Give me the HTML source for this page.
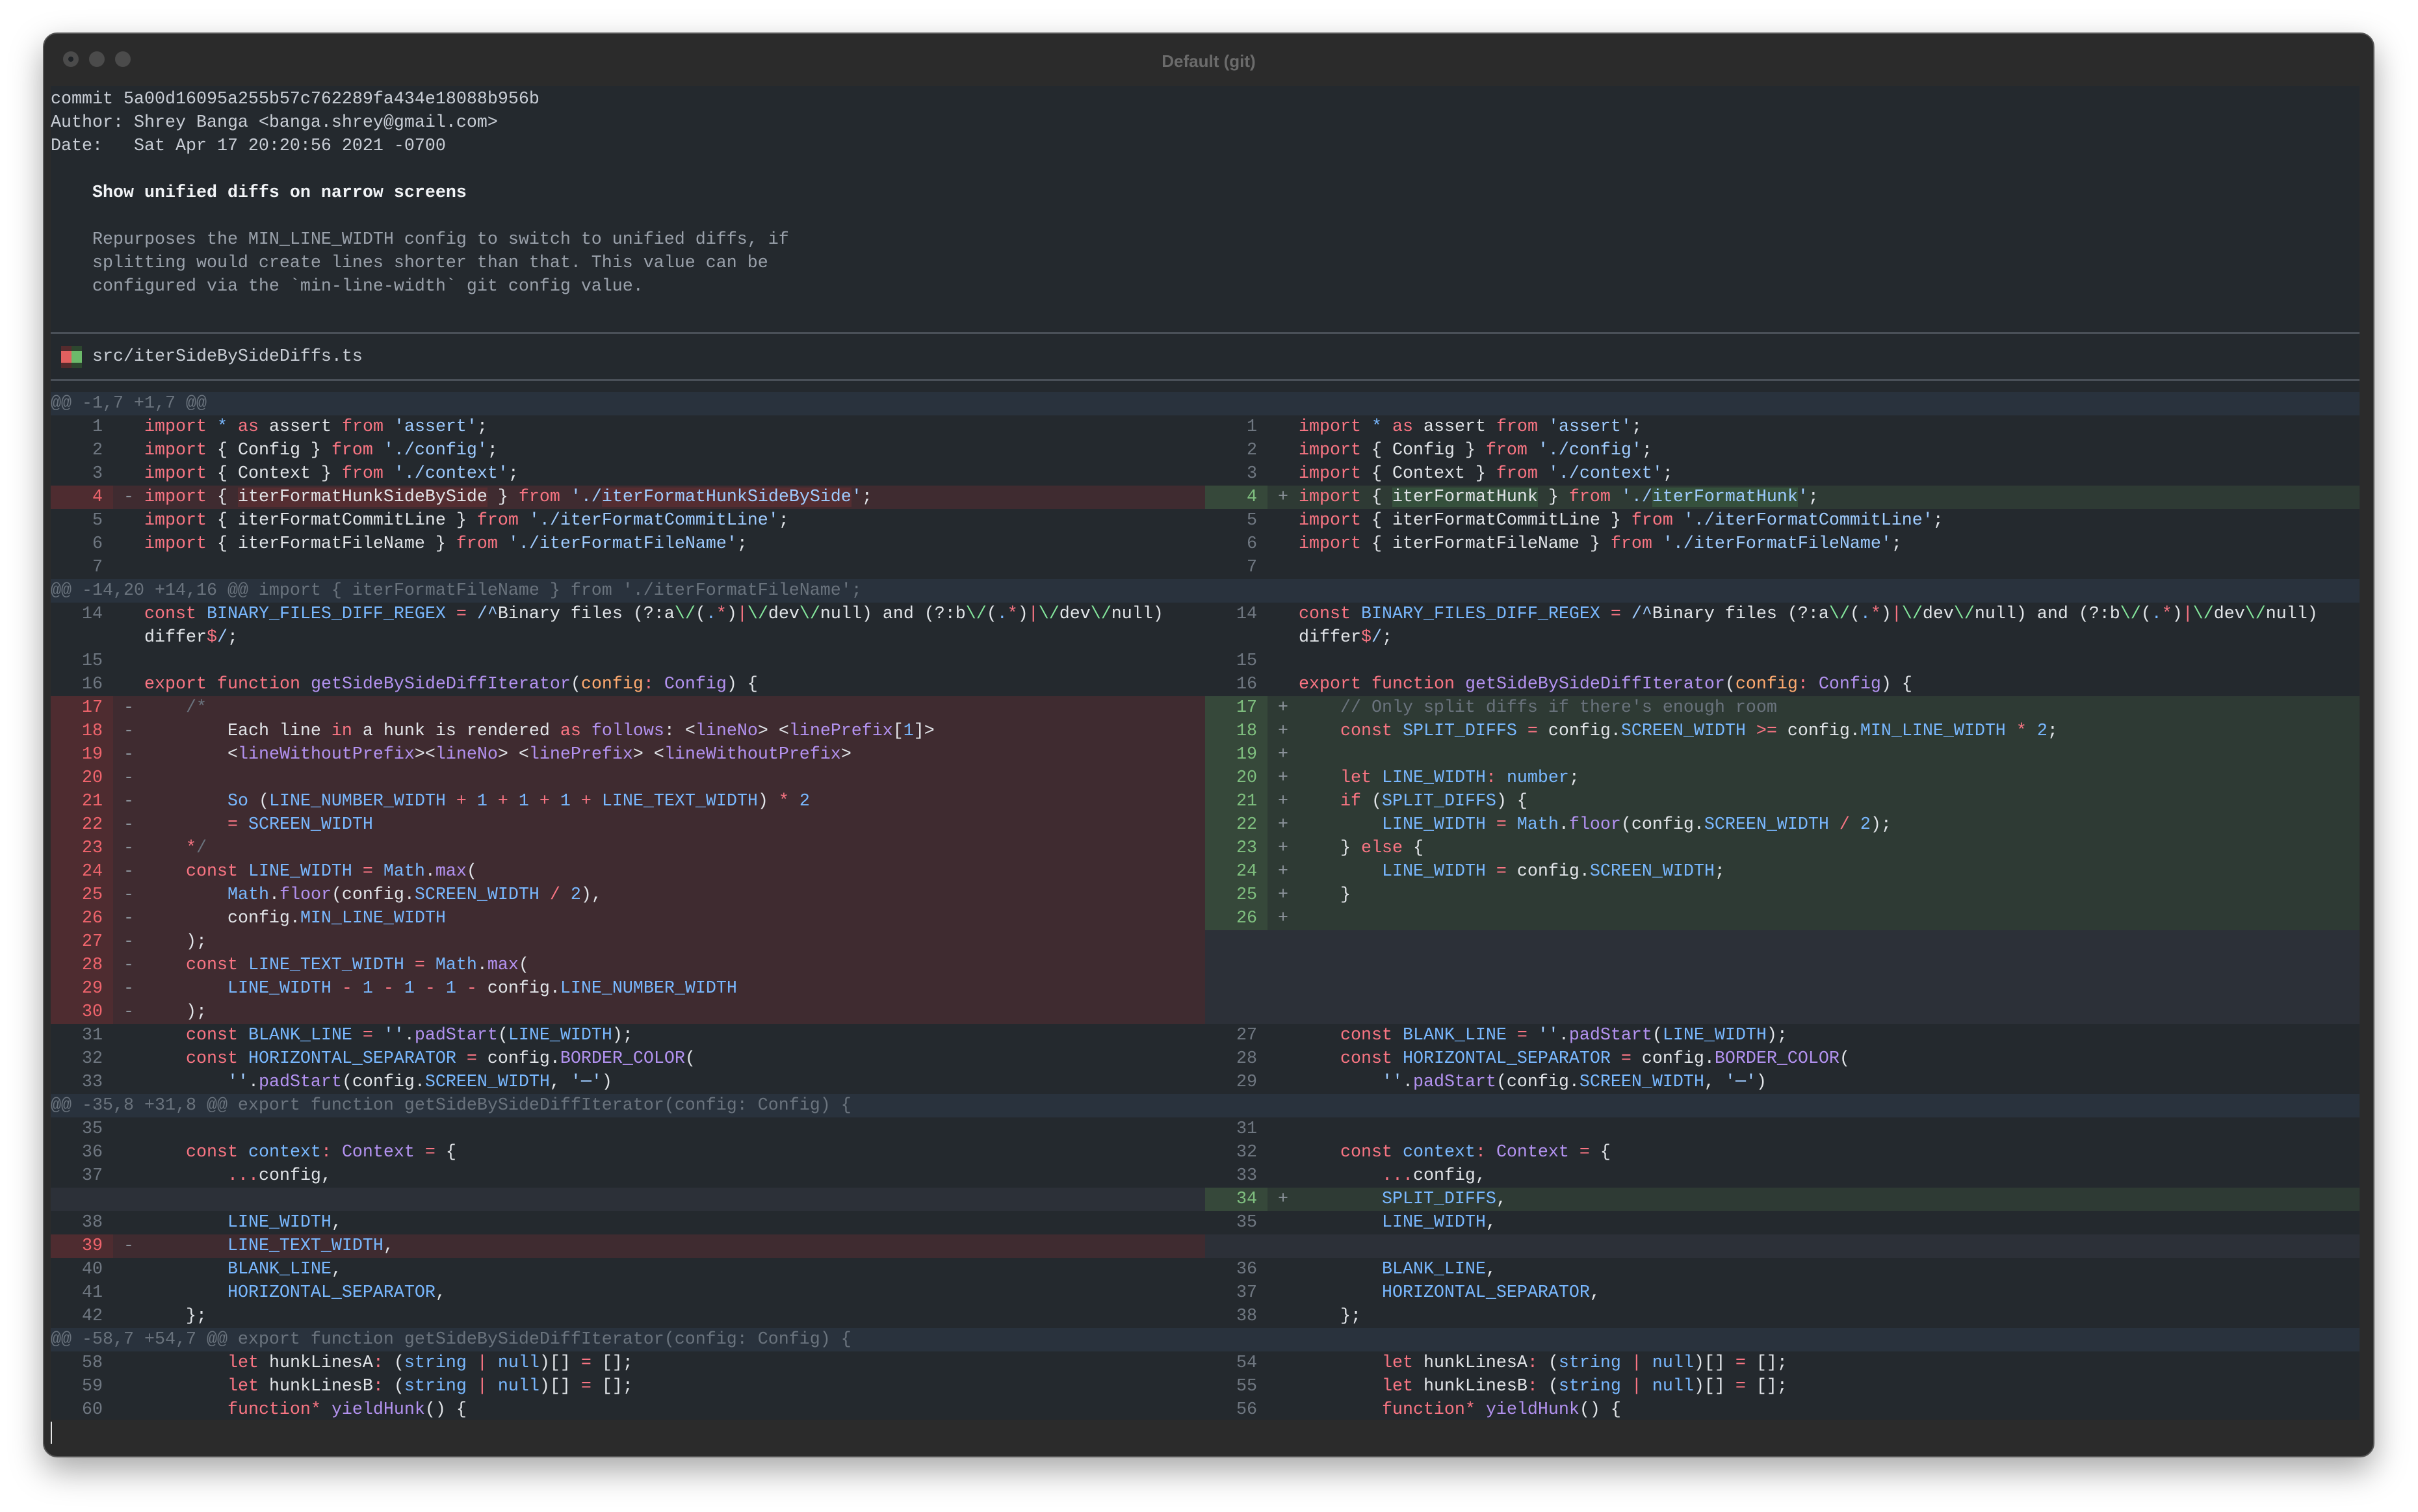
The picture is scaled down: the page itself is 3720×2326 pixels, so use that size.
<!DOCTYPE html>
<html><head><meta charset="utf-8"><style>
*{margin:0;padding:0;box-sizing:border-box}
html,body{width:3720px;height:2326px;background:#fff;overflow:hidden}
#win{position:absolute;left:66px;top:50px;width:3587px;height:2192px;background:#2b2b2b;border:2px solid #555;border-radius:22px;box-shadow:0 20px 50px rgba(0,0,0,.35)}
.tl{position:absolute;top:27px;width:24px;height:24px;border-radius:50%;background:#4b4b4b}
#title{position:absolute;left:0;right:0;top:27px;text-align:center;font:bold 26px "Liberation Sans",sans-serif;color:#6b6b6b}
#content{position:absolute;left:78px;top:132px;width:3552px;height:2052px;background:#24292e}
#w{position:absolute;left:0;top:3px;width:3720px;height:2300px}
.r{position:absolute;height:36px;line-height:36px;white-space:pre;font-family:"Liberation Mono",monospace;font-size:26.67px;color:#e1e4e8}
.full{left:78px;width:3552px}
.L{left:78px;width:1776px}
.R{left:1854px;width:1776px}
.h{background:#29323d;color:#6a737d}
.d{background:linear-gradient(to right,#4e2c30 96px,#3f2b30 96px)}
.a{background:linear-gradient(to right,#36483a 96px,#2e3a34 96px)}
.e{background:#2c3038}
.n{color:#6f7781}
.d .n{color:#f0646c}
.a .n{color:#7fbf7f}
.m{color:#8b929a}
.k{color:#f97583}.f{color:#b392f0}.c{color:#79b8ff}.s{color:#9ecbff}.p{color:#ffab70}.t{color:#b392f0}.o{color:#6a737d}.g{color:#85e89d}
.hd{background:#552d31}.ha{background:#35503c}
.gr{color:#c9ced6}.dim{color:#9aa1ab}
.sep{position:absolute;left:78px;width:3552px;height:3px;background:#4a5058}
</style></head><body>
<div id="win">
<div class="tl" style="left:29px"><div style="position:absolute;left:8px;top:8px;width:8px;height:8px;border-radius:50%;background:#1f2327"></div></div>
<div class="tl" style="left:69px"></div>
<div class="tl" style="left:109px"></div>
<div id="title">Default (git)</div>
</div>
<div id="content"></div>
<div id="w">
<div class="r full gr" style="top:132px">commit 5a00d16095a255b57c762289fa434e18088b956b</div>
<div class="r full gr" style="top:168px">Author: Shrey Banga &lt;banga.shrey@gmail.com&gt;</div>
<div class="r full gr" style="top:204px">Date:   Sat Apr 17 20:20:56 2021 -0700</div>
<div class="r full" style="top:276px;font-weight:bold;color:#f2f4f7">    Show unified diffs on narrow screens</div>
<div class="r full dim" style="top:348px">    Repurposes the MIN_LINE_WIDTH config to switch to unified diffs, if</div>
<div class="r full dim" style="top:384px">    splitting would create lines shorter than that. This value can be</div>
<div class="r full dim" style="top:420px">    configured via the `min-line-width` git config value.</div>
<div class="sep" style="top:508px"></div>
<div style="position:absolute;left:94px;top:529px;width:16px;height:34px;background:#552b2d"></div>
<div style="position:absolute;left:110px;top:529px;width:16px;height:34px;background:#2d472f"></div>
<div style="position:absolute;left:94px;top:537px;width:16px;height:18px;background:#e2605f"></div>
<div style="position:absolute;left:110px;top:537px;width:16px;height:18px;background:#6cba6a"></div>
<div class="r full gr" style="top:528px">    src/iterSideBySideDiffs.ts</div>
<div class="sep" style="top:580px"></div>

<div class="r full h" style="top:600px">@@ -1,7 +1,7 @@</div>
<div class="r L" style="top:636px"><span class="n">    1</span>    <span class="k">import</span> <span class="c">*</span> <span class="k">as</span> assert <span class="k">from</span> <span class="s">'assert'</span>;</div>
<div class="r R" style="top:636px"><span class="n">    1</span>    <span class="k">import</span> <span class="c">*</span> <span class="k">as</span> assert <span class="k">from</span> <span class="s">'assert'</span>;</div>
<div class="r L" style="top:672px"><span class="n">    2</span>    <span class="k">import</span> { Config } <span class="k">from</span> <span class="s">'./config'</span>;</div>
<div class="r R" style="top:672px"><span class="n">    2</span>    <span class="k">import</span> { Config } <span class="k">from</span> <span class="s">'./config'</span>;</div>
<div class="r L" style="top:708px"><span class="n">    3</span>    <span class="k">import</span> { Context } <span class="k">from</span> <span class="s">'./context'</span>;</div>
<div class="r R" style="top:708px"><span class="n">    3</span>    <span class="k">import</span> { Context } <span class="k">from</span> <span class="s">'./context'</span>;</div>
<div class="r L d" style="top:744px"><span class="n">    4</span>  <span class="m">-</span> <span class="k">import</span> { <span class="hd">iterFormatHunkSideBySide</span> } <span class="k">from</span> <span class="s">'./<span class="hd">iterFormatHunkSideBySide</span>'</span>;</div>
<div class="r R a" style="top:744px"><span class="n">    4</span>  <span class="m">+</span> <span class="k">import</span> { <span class="ha">iterFormatHunk</span> } <span class="k">from</span> <span class="s">'./<span class="ha">iterFormatHunk</span>'</span>;</div>
<div class="r L" style="top:780px"><span class="n">    5</span>    <span class="k">import</span> { iterFormatCommitLine } <span class="k">from</span> <span class="s">'./iterFormatCommitLine'</span>;</div>
<div class="r R" style="top:780px"><span class="n">    5</span>    <span class="k">import</span> { iterFormatCommitLine } <span class="k">from</span> <span class="s">'./iterFormatCommitLine'</span>;</div>
<div class="r L" style="top:816px"><span class="n">    6</span>    <span class="k">import</span> { iterFormatFileName } <span class="k">from</span> <span class="s">'./iterFormatFileName'</span>;</div>
<div class="r R" style="top:816px"><span class="n">    6</span>    <span class="k">import</span> { iterFormatFileName } <span class="k">from</span> <span class="s">'./iterFormatFileName'</span>;</div>
<div class="r L" style="top:852px"><span class="n">    7</span></div>
<div class="r R" style="top:852px"><span class="n">    7</span></div>

<div class="r full h" style="top:888px">@@ -14,20 +14,16 @@ import { iterFormatFileName } from './iterFormatFileName';</div>
<div class="r L" style="top:924px"><span class="n">   14</span>    <span class="k">const</span> <span class="c">BINARY_FILES_DIFF_REGEX</span> <span class="k">=</span> <span class="s">/^</span>Binary files (?:a<span class="g">\/</span>(<span class="c">.</span><span class="k">*</span>)<span class="k">|</span><span class="g">\/</span>dev<span class="g">\/</span>null) and (?:b<span class="g">\/</span>(<span class="c">.</span><span class="k">*</span>)<span class="k">|</span><span class="g">\/</span>dev<span class="g">\/</span>null)</div>
<div class="r R" style="top:924px"><span class="n">   14</span>    <span class="k">const</span> <span class="c">BINARY_FILES_DIFF_REGEX</span> <span class="k">=</span> <span class="s">/^</span>Binary files (?:a<span class="g">\/</span>(<span class="c">.</span><span class="k">*</span>)<span class="k">|</span><span class="g">\/</span>dev<span class="g">\/</span>null) and (?:b<span class="g">\/</span>(<span class="c">.</span><span class="k">*</span>)<span class="k">|</span><span class="g">\/</span>dev<span class="g">\/</span>null)</div>
<div class="r L" style="top:960px">         differ<span class="k">$</span><span class="s">/</span>;</div>
<div class="r R" style="top:960px">         differ<span class="k">$</span><span class="s">/</span>;</div>
<div class="r L" style="top:996px"><span class="n">   15</span></div>
<div class="r R" style="top:996px"><span class="n">   15</span></div>
<div class="r L" style="top:1032px"><span class="n">   16</span>    <span class="k">export</span> <span class="k">function</span> <span class="f">getSideBySideDiffIterator</span>(<span class="p">config</span><span class="k">:</span> <span class="t">Config</span>) {</div>
<div class="r R" style="top:1032px"><span class="n">   16</span>    <span class="k">export</span> <span class="k">function</span> <span class="f">getSideBySideDiffIterator</span>(<span class="p">config</span><span class="k">:</span> <span class="t">Config</span>) {</div>

<div class="r L d" style="top:1068px"><span class="n">   17</span>  <span class="m">-</span>     <span class="o">/*</span></div>
<div class="r L d" style="top:1104px"><span class="n">   18</span>  <span class="m">-</span>         Each line <span class="k">in</span> a hunk is rendered <span class="k">as</span> <span class="t">follows</span>: &lt;<span class="t">lineNo</span>&gt; &lt;<span class="t">linePrefix</span>[<span class="c">1</span>]&gt;</div>
<div class="r L d" style="top:1140px"><span class="n">   19</span>  <span class="m">-</span>         &lt;<span class="t">lineWithoutPrefix</span>&gt;&lt;<span class="t">lineNo</span>&gt; &lt;<span class="t">linePrefix</span>&gt; &lt;<span class="t">lineWithoutPrefix</span>&gt;</div>
<div class="r L d" style="top:1176px"><span class="n">   20</span>  <span class="m">-</span></div>
<div class="r L d" style="top:1212px"><span class="n">   21</span>  <span class="m">-</span>         <span class="c">So</span> (<span class="c">LINE_NUMBER_WIDTH</span> <span class="k">+</span> <span class="c">1</span> <span class="k">+</span> <span class="c">1</span> <span class="k">+</span> <span class="c">1</span> <span class="k">+</span> <span class="c">LINE_TEXT_WIDTH</span>) <span class="k">*</span> <span class="c">2</span></div>
<div class="r L d" style="top:1248px"><span class="n">   22</span>  <span class="m">-</span>         <span class="k">=</span> <span class="c">SCREEN_WIDTH</span></div>
<div class="r L d" style="top:1284px"><span class="n">   23</span>  <span class="m">-</span>     <span class="k">*</span><span class="o">/</span></div>
<div class="r L d" style="top:1320px"><span class="n">   24</span>  <span class="m">-</span>     <span class="k">const</span> <span class="c">LINE_WIDTH</span> <span class="k">=</span> <span class="c">Math</span>.<span class="f">max</span>(</div>
<div class="r L d" style="top:1356px"><span class="n">   25</span>  <span class="m">-</span>         <span class="c">Math</span>.<span class="f">floor</span>(config.<span class="c">SCREEN_WIDTH</span> <span class="k">/</span> <span class="c">2</span>),</div>
<div class="r L d" style="top:1392px"><span class="n">   26</span>  <span class="m">-</span>         config.<span class="c">MIN_LINE_WIDTH</span></div>
<div class="r L d" style="top:1428px"><span class="n">   27</span>  <span class="m">-</span>     );</div>
<div class="r L d" style="top:1464px"><span class="n">   28</span>  <span class="m">-</span>     <span class="k">const</span> <span class="c">LINE_TEXT_WIDTH</span> <span class="k">=</span> <span class="c">Math</span>.<span class="f">max</span>(</div>
<div class="r L d" style="top:1500px"><span class="n">   29</span>  <span class="m">-</span>         <span class="c">LINE_WIDTH</span> <span class="k">-</span> <span class="c">1</span> <span class="k">-</span> <span class="c">1</span> <span class="k">-</span> <span class="c">1</span> <span class="k">-</span> config.<span class="c">LINE_NUMBER_WIDTH</span></div>
<div class="r L d" style="top:1536px"><span class="n">   30</span>  <span class="m">-</span>     );</div>

<div class="r R a" style="top:1068px"><span class="n">   17</span>  <span class="m">+</span>     <span class="o">// Only split diffs if there's enough room</span></div>
<div class="r R a" style="top:1104px"><span class="n">   18</span>  <span class="m">+</span>     <span class="k">const</span> <span class="c">SPLIT_DIFFS</span> <span class="k">=</span> config.<span class="c">SCREEN_WIDTH</span> <span class="k">&gt;=</span> config.<span class="c">MIN_LINE_WIDTH</span> <span class="k">*</span> <span class="c">2</span>;</div>
<div class="r R a" style="top:1140px"><span class="n">   19</span>  <span class="m">+</span></div>
<div class="r R a" style="top:1176px"><span class="n">   20</span>  <span class="m">+</span>     <span class="k">let</span> <span class="c">LINE_WIDTH</span><span class="k">:</span> <span class="c">number</span>;</div>
<div class="r R a" style="top:1212px"><span class="n">   21</span>  <span class="m">+</span>     <span class="k">if</span> (<span class="c">SPLIT_DIFFS</span>) {</div>
<div class="r R a" style="top:1248px"><span class="n">   22</span>  <span class="m">+</span>         <span class="c">LINE_WIDTH</span> <span class="k">=</span> <span class="c">Math</span>.<span class="f">floor</span>(config.<span class="c">SCREEN_WIDTH</span> <span class="k">/</span> <span class="c">2</span>);</div>
<div class="r R a" style="top:1284px"><span class="n">   23</span>  <span class="m">+</span>     } <span class="k">else</span> {</div>
<div class="r R a" style="top:1320px"><span class="n">   24</span>  <span class="m">+</span>         <span class="c">LINE_WIDTH</span> <span class="k">=</span> config.<span class="c">SCREEN_WIDTH</span>;</div>
<div class="r R a" style="top:1356px"><span class="n">   25</span>  <span class="m">+</span>     }</div>
<div class="r R a" style="top:1392px"><span class="n">   26</span>  <span class="m">+</span></div>
<div class="r R e" style="top:1428px;height:144px"></div>

<div class="r L" style="top:1572px"><span class="n">   31</span>        <span class="k">const</span> <span class="c">BLANK_LINE</span> <span class="k">=</span> <span class="s">''</span>.<span class="f">padStart</span>(<span class="c">LINE_WIDTH</span>);</div>
<div class="r R" style="top:1572px"><span class="n">   27</span>        <span class="k">const</span> <span class="c">BLANK_LINE</span> <span class="k">=</span> <span class="s">''</span>.<span class="f">padStart</span>(<span class="c">LINE_WIDTH</span>);</div>
<div class="r L" style="top:1608px"><span class="n">   32</span>        <span class="k">const</span> <span class="c">HORIZONTAL_SEPARATOR</span> <span class="k">=</span> config.<span class="f">BORDER_COLOR</span>(</div>
<div class="r R" style="top:1608px"><span class="n">   28</span>        <span class="k">const</span> <span class="c">HORIZONTAL_SEPARATOR</span> <span class="k">=</span> config.<span class="f">BORDER_COLOR</span>(</div>
<div class="r L" style="top:1644px"><span class="n">   33</span>            <span class="s">''</span>.<span class="f">padStart</span>(config.<span class="c">SCREEN_WIDTH</span>, <span class="s">'─'</span>)</div>
<div class="r R" style="top:1644px"><span class="n">   29</span>            <span class="s">''</span>.<span class="f">padStart</span>(config.<span class="c">SCREEN_WIDTH</span>, <span class="s">'─'</span>)</div>

<div class="r full h" style="top:1680px">@@ -35,8 +31,8 @@ export function getSideBySideDiffIterator(config: Config) {</div>
<div class="r L" style="top:1716px"><span class="n">   35</span></div>
<div class="r R" style="top:1716px"><span class="n">   31</span></div>
<div class="r L" style="top:1752px"><span class="n">   36</span>        <span class="k">const</span> <span class="c">context</span><span class="k">:</span> <span class="t">Context</span> <span class="k">=</span> {</div>
<div class="r R" style="top:1752px"><span class="n">   32</span>        <span class="k">const</span> <span class="c">context</span><span class="k">:</span> <span class="t">Context</span> <span class="k">=</span> {</div>
<div class="r L" style="top:1788px"><span class="n">   37</span>            <span class="k">...</span>config,</div>
<div class="r R" style="top:1788px"><span class="n">   33</span>            <span class="k">...</span>config,</div>
<div class="r L e" style="top:1824px"></div>
<div class="r R a" style="top:1824px"><span class="n">   34</span>  <span class="m">+</span>         <span class="c">SPLIT_DIFFS</span>,</div>
<div class="r L" style="top:1860px"><span class="n">   38</span>            <span class="c">LINE_WIDTH</span>,</div>
<div class="r R" style="top:1860px"><span class="n">   35</span>            <span class="c">LINE_WIDTH</span>,</div>
<div class="r L d" style="top:1896px"><span class="n">   39</span>  <span class="m">-</span>         <span class="c">LINE_TEXT_WIDTH</span>,</div>
<div class="r R e" style="top:1896px"></div>
<div class="r L" style="top:1932px"><span class="n">   40</span>            <span class="c">BLANK_LINE</span>,</div>
<div class="r R" style="top:1932px"><span class="n">   36</span>            <span class="c">BLANK_LINE</span>,</div>
<div class="r L" style="top:1968px"><span class="n">   41</span>            <span class="c">HORIZONTAL_SEPARATOR</span>,</div>
<div class="r R" style="top:1968px"><span class="n">   37</span>            <span class="c">HORIZONTAL_SEPARATOR</span>,</div>
<div class="r L" style="top:2004px"><span class="n">   42</span>        };</div>
<div class="r R" style="top:2004px"><span class="n">   38</span>        };</div>

<div class="r full h" style="top:2040px">@@ -58,7 +54,7 @@ export function getSideBySideDiffIterator(config: Config) {</div>
<div class="r L" style="top:2076px"><span class="n">   58</span>            <span class="k">let</span> hunkLinesA<span class="k">:</span> (<span class="c">string</span> <span class="k">|</span> <span class="c">null</span>)[] <span class="k">=</span> [];</div>
<div class="r R" style="top:2076px"><span class="n">   54</span>            <span class="k">let</span> hunkLinesA<span class="k">:</span> (<span class="c">string</span> <span class="k">|</span> <span class="c">null</span>)[] <span class="k">=</span> [];</div>
<div class="r L" style="top:2112px"><span class="n">   59</span>            <span class="k">let</span> hunkLinesB<span class="k">:</span> (<span class="c">string</span> <span class="k">|</span> <span class="c">null</span>)[] <span class="k">=</span> [];</div>
<div class="r R" style="top:2112px"><span class="n">   55</span>            <span class="k">let</span> hunkLinesB<span class="k">:</span> (<span class="c">string</span> <span class="k">|</span> <span class="c">null</span>)[] <span class="k">=</span> [];</div>
<div class="r L" style="top:2148px"><span class="n">   60</span>            <span class="k">function</span><span class="k">*</span> <span class="f">yieldHunk</span>() {</div>
<div class="r R" style="top:2148px"><span class="n">   56</span>            <span class="k">function</span><span class="k">*</span> <span class="f">yieldHunk</span>() {</div>
<div style="position:absolute;left:78px;top:2184px;width:2px;height:34px;background:#e6e6e6"></div>
</div>
</body></html>
